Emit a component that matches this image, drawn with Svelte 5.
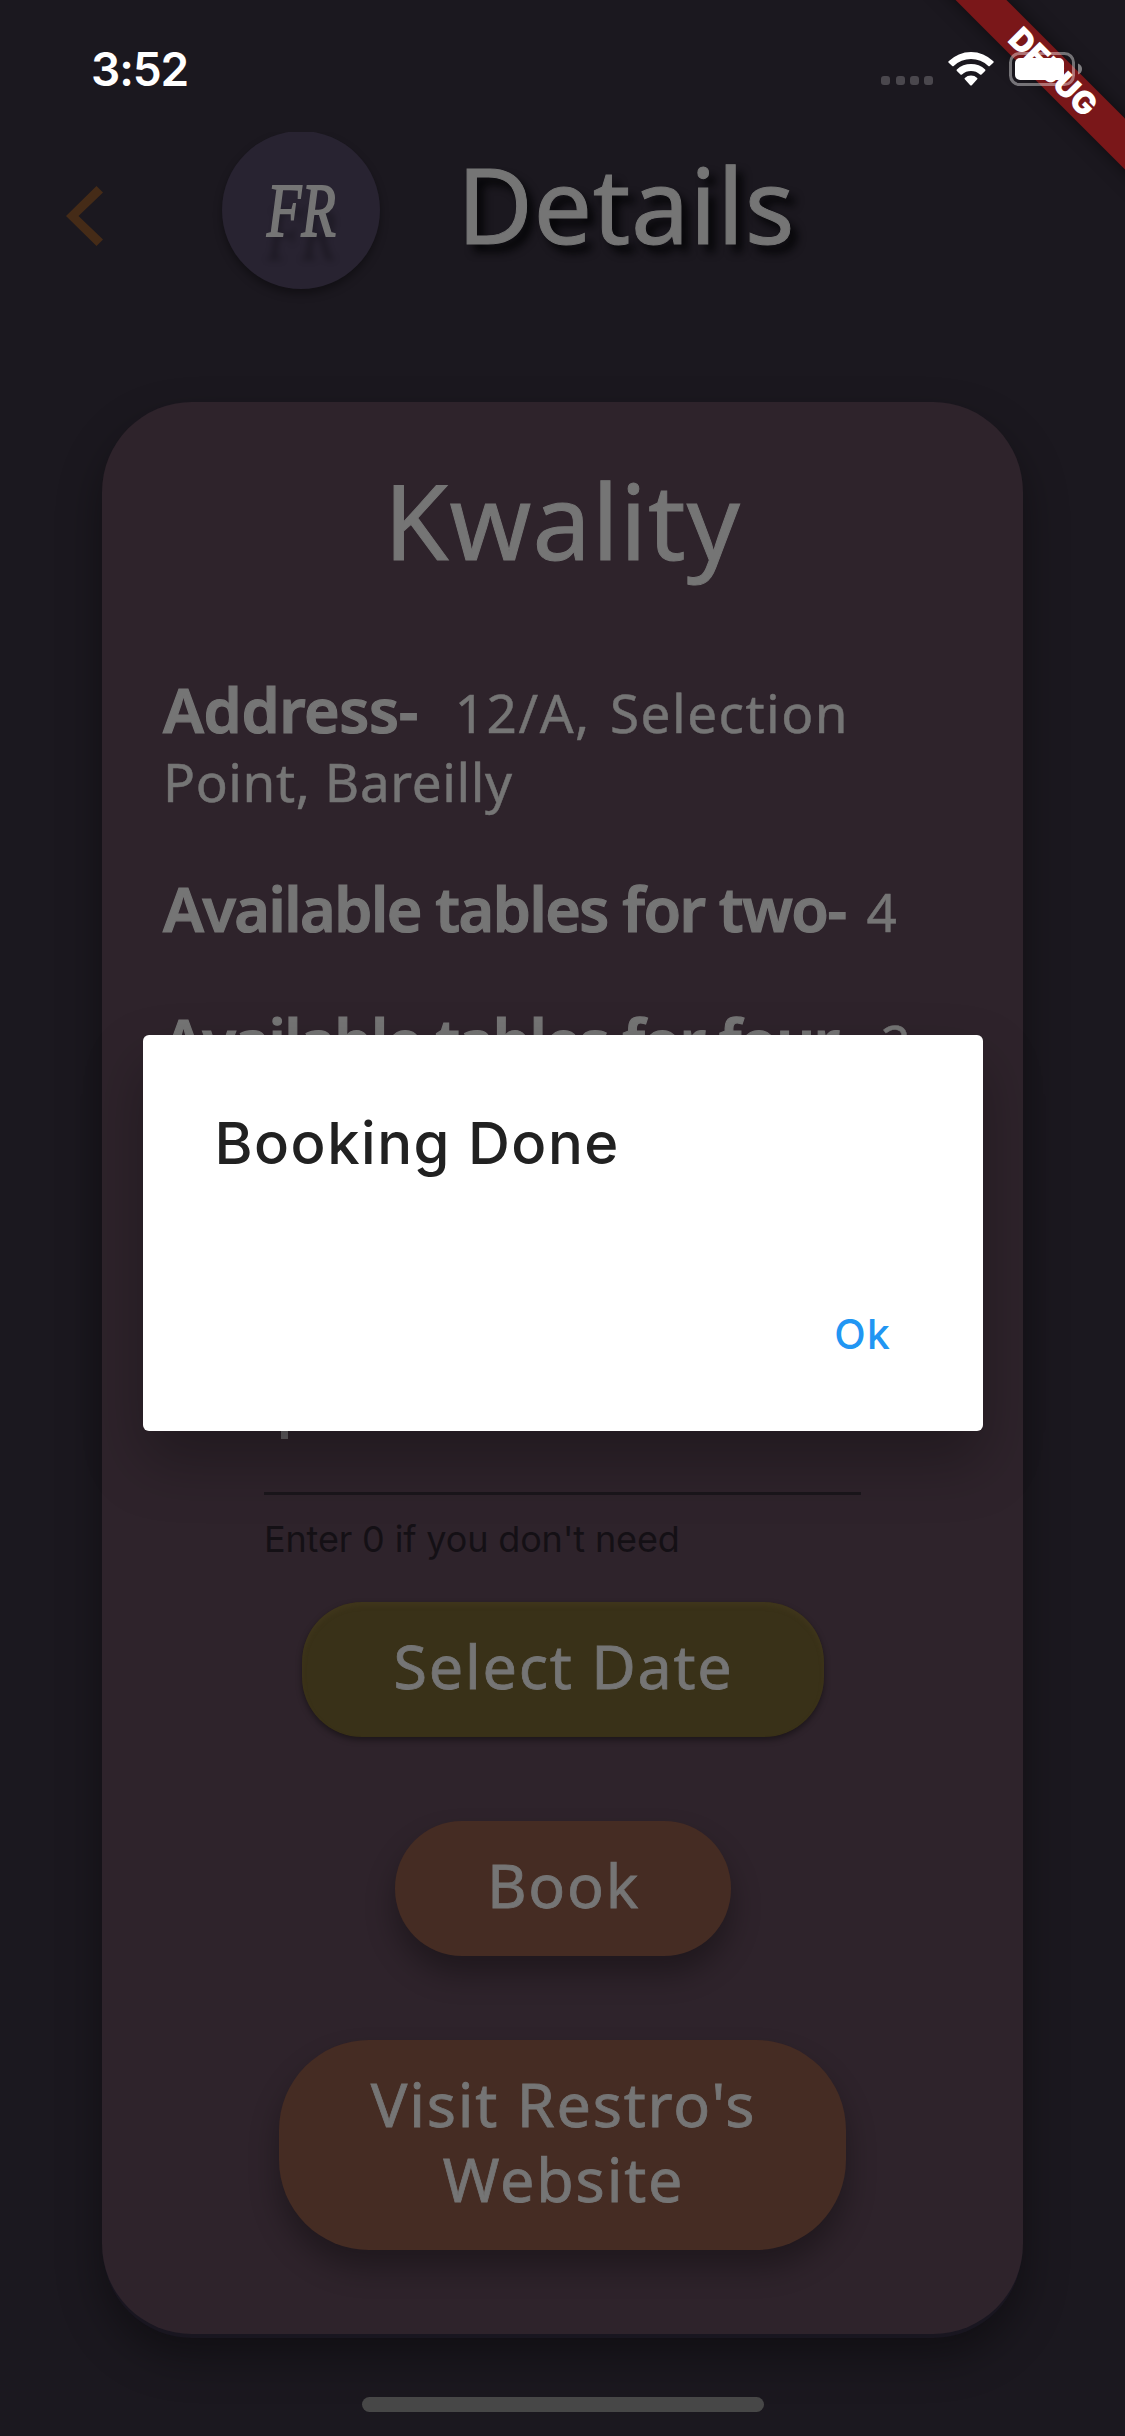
<script>
  const tables = [
    { label: 'Available tables for two-', count: 4 },
    { label: 'Available tables for four-', count: 2 }
  ];
</script>

<div class="screen">
  <div class="status">
    <span class="time">3:52</span>
    <div class="indicators">
      <div class="dots"><i></i><i></i><i></i><i></i></div>
      <svg class="wifi" viewBox="0 0 46 34" width="46" height="34">
        <path d="M0.6 9.2A32 32 0 0 1 45.4 9.2Q46 10 45.3 10.8L41.8 14.1Q41 14.6 40.3 14A25 25 0 0 0 5.7 14Q5 14.6 4.2 14.1L0.7 10.8Q0 10 0.6 9.2Z" />
        <path d="M8.8 17.6A20.5 20.5 0 0 1 37.2 17.6Q37.8 18.4 37.1 19.1L33.5 22.5Q32.8 23 32 22.4A13.4 13.4 0 0 0 14 22.4Q13.2 23 12.5 22.5L8.9 19.1Q8.2 18.4 8.8 17.6Z" />
        <path d="M16.8 25.9A9 9 0 0 1 29.2 25.9Q29.8 26.7 29.2 27.3L23.8 33.2Q23 33.9 22.2 33.2L16.8 27.3Q16.2 26.7 16.8 25.9Z" />
      </svg>
      <svg class="battery" viewBox="0 0 74 34" width="74" height="34">
        <rect x="1.5" y="1.5" width="63" height="31" rx="9" fill="none" stroke="#fff" stroke-opacity=".4" stroke-width="3" />
        <rect x="6" y="6" width="49" height="22" rx="5" fill="#fff" />
        <path d="M69 11.5Q73 13 73 17Q73 21 69 22.5Z" fill="#fff" fill-opacity=".45" />
      </svg>
    </div>
  </div>

  <div class="ribbon"><span>DEBUG</span></div>

  <header>
    <svg class="back" viewBox="0 0 38 60" width="38" height="60">
      <path d="M30.5 0L37 6.5L12.5 30L37 53.5L30.5 60L0 30Z" fill="#452b17" />
    </svg>
    <div class="logo"><span>FR</span></div>
    <h1>Details</h1>
  </header>

  <main class="card">
    <h2>Kwality</h2>
    <div class="info">
      <p class="address"><b>Address-</b><span class="place">12/A, Selection</span> <span class="town">Point, Bareilly</span></p>
      {#each tables as t}
        <p class="tables"><b>{t.label}</b><span>{t.count}</span></p>
      {/each}
    </div>
    <div class="field"><i class="caret"></i></div>
    <div class="helper">Enter 0 if you don't need</div>
    <button class="date">Select Date</button>
    <button class="book">Book</button>
    <button class="visit">Visit Restro's Website</button>
  </main>

  <div class="home"></div>

  <div class="dialog" role="dialog">
    <div class="message">Booking Done</div>
    <div class="ok">Ok</div>
  </div>
</div>

<style>
  :global(body) { margin: 0; background: #1b181f; }
  .screen {
    position: relative;
    box-sizing: border-box;
    width: 1125px;
    height: 2436px;
    overflow: hidden;
    display: flex;
    flex-direction: column;
    background: #1b181f;
    color: #757575;
    font-family: 'Noto Sans', 'Open Sans', sans-serif;
  }
  h1, h2, p { margin: 0; font-weight: 400; }

  .status {
    position: relative;
    z-index: 2;
    flex: none;
    height: 132px;
    box-sizing: border-box;
    padding: 40px 42px 0 91px;
    display: flex;
    justify-content: space-between;
    align-items: flex-start;
  }
  .time {
    font: 600 46px/58px Inter, sans-serif;
    letter-spacing: -1.1px;
    color: #fff;
  }
  .indicators { display: flex; align-items: flex-end; margin-top: 12px; }
  .dots { display: flex; gap: 5.2px; padding-bottom: 1px; margin-right: 15px; }
  .dots i { width: 9px; height: 9px; border-radius: 3px; background: #4a474d; }
  .wifi { fill: #fff; margin-right: 15px; }

  .ribbon {
    position: absolute;
    z-index: 1;
    left: 853px;
    top: 54px;
    width: 400px;
    height: 36px;
    transform: rotate(45deg);
    background: #7a1719;
    box-shadow: 0 0 18px rgba(0, 0, 0, .5);
    text-align: center;
    font: 900 31.5px/36px Inter, sans-serif;
    color: #fff;
  }

  header {
    flex: none;
    height: 270px;
    overflow: hidden;
    display: flex;
    align-items: flex-start;
    padding-left: 66px;
  }
  .back { margin-top: 54px; }
  .logo {
    margin: -1px 0 0 118px;
    width: 158px;
    height: 158px;
    border-radius: 50%;
    background: #282331;
    box-shadow: 0 5px 8px rgba(0, 0, 0, .35);
    display: flex;
    align-items: center;
    justify-content: center;
  }
  .logo span {
    font: italic 76px/80px 'Liberation Serif', serif;
    transform: scaleX(.74);
    -webkit-text-stroke: 2px #757575;
    text-shadow: 0 24px 7px rgba(0, 0, 0, .3);
  }
  h1 {
    margin: 12px 0 0 77px;
    font-size: 104px;
    line-height: 120px;
    letter-spacing: .6px;
    -webkit-text-stroke: 1px #757575;
    text-shadow: 7px 8px 8px #050507;
  }

  .card {
    flex: none;
    box-sizing: border-box;
    width: 921px;
    height: 1932px;
    margin: 0 102px;
    padding-top: 58px;
    border-radius: 90px;
    background: #2e232b;
    box-shadow: 0 5px 0 -1px #191620, 0 22px 44px rgba(0, 0, 0, .38);
    display: flex;
    flex-direction: column;
    align-items: center;
  }
  h2 {
    font-size: 104px;
    line-height: 120px;
    letter-spacing: 1.2px;
    -webkit-text-stroke: 1px #757575;
  }
  .info {
    align-self: stretch;
    height: 400px;
    margin-top: 98px;
    padding: 0 61px;
    font-size: 53px;
    line-height: 69px;
    -webkit-text-stroke: .5px #757575;
  }
  .info b {
    font-size: 61px;
    font-weight: 600;
    line-height: 0;
    letter-spacing: -.4px;
    -webkit-text-stroke: 1.2px #757575;
  }
  .place { margin-left: 37px; letter-spacing: 1.5px; word-spacing: 4px; }
  .town { letter-spacing: .6px; }
  .tables { margin-top: 61px; white-space: nowrap; }
  .tables + .tables { margin-top: 63px; }
  .tables b { letter-spacing: -1.5px; }
  .tables span { margin-left: 21px; }
  .tables + .tables span { margin-left: 24px; }

  .field {
    box-sizing: border-box;
    width: 597px;
    height: 119px;
    margin-top: 298px;
    padding: 3px 17px 0;
    border-bottom: 3px solid #1a161b;
  }
  .caret { display: block; width: 7px; height: 60px; background: #646064; }
  .helper {
    width: 597px;
    height: 44px;
    margin-top: 22px;
    font: 400 36px/44px Inter, sans-serif;
    letter-spacing: -.15px;
    color: #141015;
    white-space: nowrap;
  }
  button {
    flex: none;
    border: 0;
    box-sizing: border-box;
    padding: 26px 0 34px 2px;
    font: 400 61px/75px 'Noto Sans', 'Open Sans', sans-serif;
    letter-spacing: 1.8px;
    color: #757575;
    background: #452c23;
    box-shadow: 0 18px 30px rgba(0, 0, 0, .32);
    margin-top: 84px;
    -webkit-text-stroke: .8px #757575;
  }
  .date {
    width: 522px;
    margin-top: 41px;
    border-radius: 60px;
    background: #393118;
    box-shadow: 0 3px 6px rgba(0, 0, 0, .4), inset 0 4px 5px rgba(80, 66, 38, .3);
  }
  .book { width: 336px; border-radius: 67px; }
  .visit { width: 567px; padding-left: 72px; padding-right: 70px; border-radius: 90px; }

  .home {
    width: 402px;
    height: 15px;
    margin: 63px auto 0;
    border-radius: 8px;
    background: #474747;
    position: relative;
  }

  .dialog {
    position: absolute;
    left: 142.5px;
    top: 1035px;
    width: 840px;
    height: 396px;
    box-sizing: border-box;
    padding: 72px 91px 0 72px;
    border-radius: 6px;
    background: #fff;
    box-shadow: 0 30px 60px rgba(0, 0, 0, .28);
    font-family: Inter, sans-serif;
    display: flex;
    flex-direction: column;
  }
  .message {
    font-size: 58px;
    font-weight: 450;
    line-height: 72px;
    letter-spacing: 1.5px;
    color: #212121;
  }
  .ok {
    align-self: flex-end;
    margin-top: 130px;
    font-size: 41px;
    font-weight: 500;
    line-height: 50px;
    letter-spacing: 1.5px;
    color: #2196f3;
  }
</style>
